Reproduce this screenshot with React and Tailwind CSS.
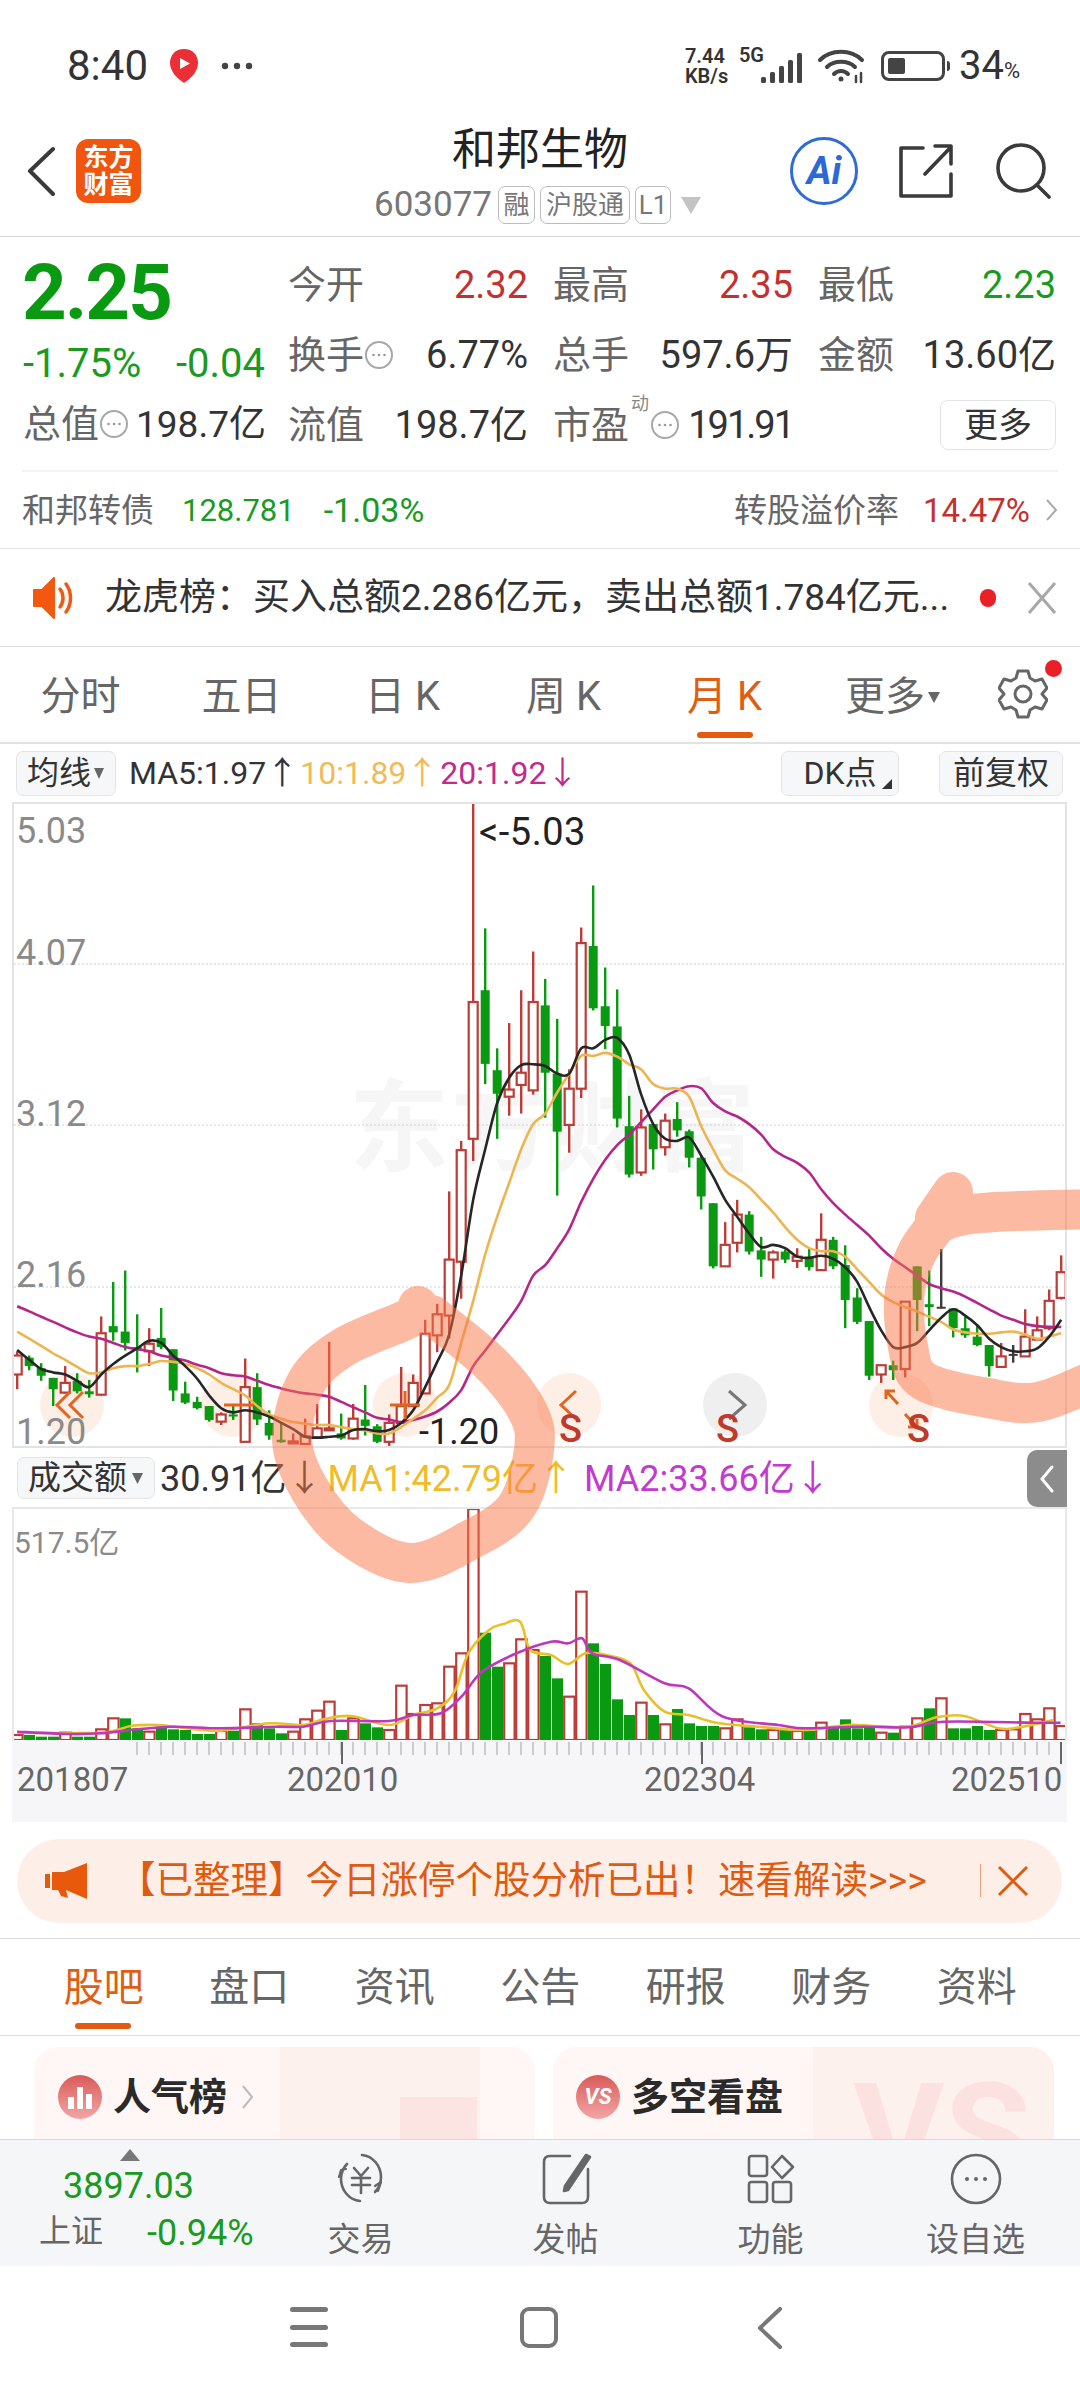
import React from "react";

const X = (i) => 17.2 + 12 * i;
const Y = (z) => 800 + z / 2.376;

const C = [
["r",1310,1320,1365,1400],["g",1320,1325,1345,1355],["g",1338,1350,1368,1380],["g",1373,1373,1400,1440],["r",1345,1385,1408,1410],["g",1362,1380,1405,1410],["g",1378,1405,1412,1420],["r",1227,1267,1413,1415],["g",1145,1250,1265,1285],["g",1118,1263,1290,1308],
["g",1222,1300,1306,1360],["r",1255,1292,1310,1345],["g",1207,1278,1300,1305],["g",1305,1305,1403,1428],["g",1382,1410,1432,1435],["g",1418,1430,1445,1448],["g",1440,1440,1473,1477],["r",1455,1460,1477,1485],["g",1435,1460,1464,1473],["r",1327,1395,1525,1525],
["g",1362,1395,1472,1485],["g",1450,1480,1510,1520],["g",1480,1520,1526,1527],["r",1505,1524,1528,1530],["r",1470,1512,1530,1530],["r",1435,1493,1515,1515],["r",1287,1493,1497,1497],["g",1458,1505,1517,1520],["r",1435,1470,1517,1520],["g",1390,1472,1487,1510],
["g",1483,1488,1525,1528],["r",1460,1480,1525,1540],["r",1347,1440,1480,1480],["r",1365,1385,1440,1440],["r",1235,1268,1410,1410],["r",1197,1222,1272,1312],["r",930,1092,1225,1280],["r",810,832,1097,1185],["r",8,480,805,858],["g",305,452,627,675],
["g",590,642,698,805],["r",530,688,705,750],["r",452,648,677,745],["r",360,480,690,700],["g",425,488,648,755],["g",520,650,788,940],["r",640,686,772,838],["r",303,340,686,708],["g",203,347,495,500],["g",398,490,537,592],
["g",450,538,757,778],["g",703,775,890,897],["r",735,778,885,893],["g",770,770,830,878],["r",745,762,825,845],["g",718,758,785,800],["g",783,787,850,873],["g",845,850,942,973],["g",958,958,1108,1113],["r",1003,1057,1108,1108],
["r",950,985,1052,1075],["g",977,985,1073,1080],["g",1038,1070,1092,1133],["r",1070,1075,1092,1137],["g",1068,1073,1092,1100],["r",1065,1085,1095,1112],["g",1065,1085,1110,1118],["r",982,1045,1117,1118],["g",1038,1045,1108,1115],["g",1058,1105,1188,1255],
["g",1160,1182,1240,1245],["g",1238,1238,1368,1378],["r",1343,1343,1365,1385],["g",1332,1343,1355,1378],["r",1192,1192,1352,1372],["g",1108,1108,1188,1262],["g",1118,1198,1205,1250],["k",1067,1204,1208,1208],["g",1208,1208,1255,1277],["g",1228,1255,1272,1278],
["g",1250,1275,1295,1298],["g",1295,1295,1345,1370],["r",1290,1322,1347,1347],["k",1295,1316,1320,1337],["r",1210,1275,1322,1322],["r",1227,1260,1282,1282],["r",1163,1190,1255,1260],["r",1082,1122,1183,1187],
];

const MA5 = [1307,1330,1352,1360,1365,1380,1395,1365,1340,1320,1303,1285,1290,1320,1345,1375,1415,1445,1455,1450,1455,1465,1480,1495,1513,1515,1513,1510,1497,1495,1500,1497,1480,1450,1395,1335,1270,1130,950,830,720,660,630,628,632,650,650,590,590,570,565,605,700,770,805,810,802,845,895,950,990,1030,1062,1057,1065,1085,1088,1083,1090,1110,1145,1205,1260,1300,1300,1290,1260,1230,1210,1225,1248,1280,1300,1310,1310,1303,1275,1235];
const MA10 = [1263,1280,1297,1315,1330,1347,1362,1360,1350,1345,1345,1340,1333,1335,1340,1350,1365,1385,1400,1415,1440,1460,1470,1478,1482,1485,1485,1490,1495,1498,1505,1505,1490,1470,1450,1420,1390,1290,1190,1080,990,910,830,770,745,695,650,608,608,601,610,628,640,675,686,686,705,775,830,880,900,920,950,980,1015,1045,1065,1072,1072,1085,1115,1145,1175,1193,1205,1215,1228,1240,1258,1265,1268,1268,1265,1263,1270,1280,1275,1267];
const MA20 = [1203,1215,1228,1240,1253,1265,1275,1280,1290,1300,1305,1310,1320,1325,1332,1342,1350,1362,1367,1370,1380,1390,1398,1405,1410,1413,1418,1430,1443,1455,1468,1472,1478,1473,1465,1453,1432,1402,1345,1308,1270,1232,1190,1130,1105,1065,1020,955,900,855,820,795,765,735,705,690,680,685,720,740,752,770,795,830,848,862,885,925,958,985,1010,1035,1065,1090,1110,1130,1150,1160,1168,1180,1195,1210,1225,1235,1245,1250,1252,1252];

const V = "r885 g885 g890 g890 r878 g890 g890 r868 r835 g835 g865 r875 g860 g868 g870 g882 g882 r873 g872 r808 g850 g865 g880 r875 r838 r812 r785 g870 r835 g850 g862 r870 r737 r822 r795 r790 r680 r640 r207 g578 g680 r670 r598 r630 g648 g715 r770 r455 g610 g672 g778 g825 r788 g825 r853 g807 g850 g858 g858 r865 r838 g862 g868 r870 g870 r873 g872 r848 g860 g838 g865 g862 r878 g878 r860 r835 g805 r775 g865 g865 g858 g870 r870 r868 r822 r838 r805 r858".split(" ").map((s) => [s[0], Number(s.slice(1))]);
const VY = (z) => 1440 + z / 3;
const VOL1 = [[25,878],[147,878],[190,858],[230,855],[260,862],[320,872],[390,850],[440,855],[470,838],[510,828],[565,855],[600,825],[635,805],[660,755],[680,640],[710,570],[730,553],[755,545],[770,630],[800,645],[825,672],[850,640],[880,645],[915,670],[935,750],[965,815],[1000,825],[1040,848],[1100,860],[1170,870],[1230,855],[1270,858],[1320,860],[1360,832],[1400,828],[1450,865],[1480,862],[1530,840]];
const VOL2 = [[25,875],[100,882],[147,880],[190,870],[250,860],[320,865],[400,860],[440,860],[480,843],[565,843],[600,825],[640,820],[670,770],[700,695],[750,640],[800,605],[825,610],[845,595],[860,640],[900,660],[965,730],[1000,745],[1050,830],[1130,855],[1170,865],[1250,860],[1320,862],[1370,845],[1500,848],[1540,848]];

function smooth(p) {
  let d = `M${p[0][0].toFixed(1)} ${p[0][1].toFixed(1)}`;
  for (let i = 0; i < p.length - 1; i++) {
    const a = p[i - 1] || p[i], b = p[i], c = p[i + 1], e = p[i + 2] || c;
    d += `C${(b[0] + (c[0] - a[0]) / 6).toFixed(1)} ${(b[1] + (c[1] - a[1]) / 6).toFixed(1)} ${(c[0] - (e[0] - b[0]) / 6).toFixed(1)} ${(c[1] - (e[1] - b[1]) / 6).toFixed(1)} ${c[0].toFixed(1)} ${c[1].toFixed(1)}`;
  }
  return d;
}
const maPath = (a) => smooth(a.map((z, i) => [X(i), Y(z)]));
const volPath = (a) => smooth(a.map(([x, y]) => [x / 1.452, VY(y)]));

const RED = "#bd3c38", GREEN = "#0a9a12", ORANGE = "#e2641f";

function PriceChart() {
  return (
    <svg viewBox="14 804 1051 642" width="1051" height="642" className="block">
      {[964, 1125, 1287].map((y) => (
        <line key={y} x1="14" x2="1065" y1={y} y2={y} stroke="#cfcfcf" strokeWidth="1" strokeDasharray="2 2" />
      ))}
      {[72, 233, 405, 569, 901].map((x) => <circle key={x} cx={x} cy="1405" r="32" fill="#fdeee6" />)}
      <circle cx="735" cy="1405" r="32" fill="#efefef" />
      {C.map(([t, wt, bt, bb, wb], i) => {
        const x = X(i);
        const col = t === "r" ? RED : t === "g" ? GREEN : "#3c3c3c";
        const h = Y(bb) - Y(bt);
        return (
          <g key={i}>
            <line x1={x} x2={x} y1={Y(wt)} y2={Y(wb)} stroke={col} strokeWidth="2.4" />
            {t === "r" ? (
              <rect x={x - 4.5} y={Y(bt)} width="9" height={Math.max(h, 2)} fill="#fff" stroke={col} strokeWidth="2.2" />
            ) : (
              <rect x={x - 4.5} y={Y(bt)} width="9" height={Math.max(h, 2)} fill={col} />
            )}
          </g>
        );
      })}
      <path d={maPath(MA20)} fill="none" stroke="#b5268b" strokeWidth="2.6" />
      <path d={maPath(MA10)} fill="none" stroke="#eeb451" strokeWidth="2.6" />
      <path d={maPath(MA5)} fill="none" stroke="#262626" strokeWidth="2.6" />
      <g fill="none" stroke={ORANGE} strokeWidth="3">
        <path d="M70 1392L57 1405L70 1418M83 1392L70 1405L83 1418" />
        <path d="M224 1405H253" />
        <path d="M390 1405H420M405 1391V1419" />
        <path d="M576 1391L561 1405L576 1419" />
        <path d="M898 1404L886 1391M886 1399V1391H895M905 1414L917 1427M917 1419V1427H908" />
      </g>
      <path d="M729 1391L745 1405L729 1419" fill="none" stroke="#777" strokeWidth="3" />
    </svg>
  );
}

function VolChart() {
  return (
    <svg viewBox="14 1509 1051 231" width="1051" height="231" className="block">
      {V.map(([t, z], i) => {
        const x = X(i), y = VY(z);
        return t === "r" ? (
          <rect key={i} x={x - 5} y={y} width="10.4" height={1740 - y} fill="#fff" stroke={RED} strokeWidth="2.2" />
        ) : (
          <rect key={i} x={x - 5.2} y={y} width="11" height={1740 - y} fill={GREEN} />
        );
      })}
      <path d={volPath(VOL1)} fill="none" stroke="#e8c02a" strokeWidth="2.6" />
      <path d={volPath(VOL2)} fill="none" stroke="#bd38bd" strokeWidth="2.6" />
    </svg>
  );
}

const Dots = () => (
  <svg width="30" height="30" viewBox="0 0 30 30" className="shrink-0">
    <circle cx="15" cy="15" r="13" fill="none" stroke="#a8a8a8" strokeWidth="2" />
    <circle cx="9.5" cy="15" r="1.3" fill="#999" /><circle cx="15" cy="15" r="1.3" fill="#999" /><circle cx="20.5" cy="15" r="1.3" fill="#999" />
  </svg>
);

const Cell = ({ label, extra, value, cls = "text-[#333]" }) => (
  <div className="flex items-center justify-between h-[70px] whitespace-nowrap">
    <span className="flex items-center text-[#666]">{label}{extra}</span>
    <span className={cls}>{value}</span>
  </div>
);

const Tag = ({ children, w }) => (
  <span className={`flex items-center justify-center h-[38px] border border-[#bdbdbd] rounded-[7px] text-[26px] text-[#777] ${w}`}>{children}</span>
);

const Stroke = ({ children, w = 52, vb = "0 0 52 52" }) => (
  <svg width={w} height={w} viewBox={vb} fill="none" stroke="#666" strokeWidth="2.6" strokeLinecap="round" strokeLinejoin="round">{children}</svg>
);

const NavItem = ({ icon, label }) => (
  <div className="w-[205px] flex flex-col items-center">
    <div className="h-[64px] mt-[7px] flex items-center justify-center">{icon}</div>
    <span className="text-[33px] leading-none mt-[12px] text-[#666]">{label}</span>
  </div>
);

export default function App() {
  return (
    <div className="relative w-[1080px] h-[2400px] overflow-hidden bg-white font-[Roboto,'Noto_Sans_CJK_SC',sans-serif] font-light">
      {/* status bar */}
      <div className="h-[120px] pt-[46px] flex items-start justify-between pl-[67px] pr-[60px]">
        <div className="flex items-center h-[40px]">
          <span className="text-[42px] font-normal text-[#333] leading-none">8:40</span>
          <svg width="32" height="36" viewBox="0 0 32 36" className="ml-[20px]">
            <path d="M16 1C7.5 1 2 7 2 15C2 24 10 31 16 35C22 31 30 24 30 15C30 7 24.5 1 16 1Z" fill="#ec2f36" />
            <path d="M12 10L22 15.500L12 21Z" fill="#fff" />
          </svg>
          <svg width="32" height="8" viewBox="0 0 32 8" className="ml-[21px]">
            <circle cx="4" cy="4" r="3.200" fill="#444" /><circle cx="16" cy="4" r="3.200" fill="#444" /><circle cx="28" cy="4" r="3.200" fill="#444" />
          </svg>
        </div>
        <div className="flex items-center h-[40px] text-[#333]">
          <div className="flex flex-col text-[20px] font-semibold leading-[20px] w-[54px]">
            <span>7.44</span><span>KB/s</span>
          </div>
          <div className="relative w-[64px] h-[40px]">
            <span className="absolute left-0 top-0 text-[20px] font-semibold leading-[19px]">5G</span>
            <svg width="46" height="32" viewBox="0 0 46 32" className="absolute left-[20px] top-[6px]">
              <rect x="2" y="25" width="5" height="6" rx="1.500" fill="#444" />
              <rect x="11" y="20" width="5" height="11" rx="1.500" fill="#444" />
              <rect x="20" y="14" width="5" height="17" rx="1.500" fill="#444" />
              <rect x="29" y="8" width="5" height="23" rx="1.500" fill="#444" />
              <rect x="38" y="1" width="5" height="30" rx="1.500" fill="#444" />
            </svg>
          </div>
          <svg width="50" height="36" viewBox="0 0 50 36" className="ml-[14px]" fill="none" stroke="#444" strokeWidth="4" strokeLinecap="round">
            <path d="M3 12C14 1 34 1 45 12" />
            <path d="M10 19C17 12 31 12 38 19" />
            <path d="M17 26C21 22 27 22 31 26" />
            <circle cx="24" cy="31" r="2.500" fill="#444" stroke="none" />
            <path d="M39 28V34M44 25V34" strokeWidth="2.500" />
          </svg>
          <div className="ml-[14px] flex items-center">
            <div className="w-[64px] h-[30px] rounded-[8px] border-[3px] border-[#444] p-[4px]">
              <div className="w-[17px] h-full bg-[#444] rounded-[2px]" />
            </div>
            <div className="w-[3px] h-[10px] ml-[2px] bg-[#444] rounded-r-sm" />
          </div>
          <span className="ml-[9px] text-[40px] font-normal leading-none">34</span>
          <span className="text-[22px] font-normal leading-none mt-[10px]">%</span>
        </div>
      </div>

      {/* header */}
      <div className="h-[117px] border-b border-[#d6d6d6] flex">
        <div className="w-[300px] flex items-center gap-[20px] pl-[26px] pb-[14px]">
          <svg width="30" height="50" viewBox="0 0 30 50" fill="none" stroke="#3a3a3a" strokeWidth="4" strokeLinecap="round" strokeLinejoin="round" className="shrink-0">
            <path d="M27 3L4 25L27 48" />
          </svg>
          <div className="w-[65px] h-[64px] shrink-0 rounded-[12px] bg-[#f0560f] flex flex-col items-center justify-center text-white text-[25px] leading-[27px] font-bold">
            <span>东方</span><span>财富</span>
          </div>
        </div>
        <div className="flex-1 flex flex-col items-center">
          <div className="h-[60px] flex items-center text-[44px] text-[#222] font-normal leading-none">和邦生物</div>
          <div className="h-[50px] flex items-center gap-[5px] text-[35px] text-[#777] font-normal whitespace-nowrap -ml-[4px]">
            <span className="mr-[1px]">603077</span>
            <Tag w="w-[37px]">融</Tag>
            <Tag w="w-[90px]">沪股通</Tag>
            <Tag w="w-[36px]">L1</Tag>
            <svg width="22" height="20" viewBox="0 0 22 20" className="ml-[4px] shrink-0"><path d="M1 2H21L11 19Z" fill="#c4c4c4" /></svg>
          </div>
        </div>
        <div className="w-[300px] flex items-center justify-end pr-[29px] pb-[14px]">
          <div className="w-[68px] h-[68px] shrink-0 rounded-full border-[3px] border-[#2f6bd6] flex items-center justify-center text-[#2b68d8] text-[38px] font-bold italic leading-none">Ai</div>
          <svg width="54" height="54" viewBox="0 0 54 54" fill="none" stroke="#3a3a3a" strokeWidth="3.600" className="ml-[41px] shrink-0" strokeLinecap="round" strokeLinejoin="round">
            <path d="M24 4H2V52H52V30" /><path d="M52 2H36M52 2V20M52 3L26 30" />
          </svg>
          <svg width="56" height="56" viewBox="0 0 56 56" fill="none" stroke="#3a3a3a" strokeWidth="3.600" className="ml-[42px] shrink-0" strokeLinecap="round">
            <circle cx="26" cy="25" r="23" /><path d="M42 42L54 54" />
          </svg>
        </div>
      </div>

      {/* quote */}
      <div className="h-[233px] pt-[13px] pl-[24px] pr-[24px] flex text-[38px] font-normal leading-none">
        <div className="w-[264px] shrink-0 flex flex-col -mt-[2px]">
          <div className="h-[90px] flex items-center text-[78px] font-bold text-[#0a9a12] -tracking-[2px] -ml-[2px]">2.25</div>
          <div className="h-[52px] w-[242px] -ml-[1px] flex items-center justify-between text-[40px] text-[#1a9a1f]"><span>-1.75%</span><span>-0.04</span></div>
          <div className="h-[68px] flex items-center text-[#333] whitespace-nowrap -ml-[1px]"><span className="text-[#666]">总值</span><Dots /><span className="ml-[7px] text-[37px]">198.7亿</span></div>
        </div>
        <div className="grid grid-cols-[240px_240px_238px] gap-x-[25px] h-[210px]">
          <Cell label="今开" value="2.32" cls="text-[#c3302f]" />
          <Cell label="最高" value="2.35" cls="text-[#c3302f]" />
          <Cell label="最低" value="2.23" cls="text-[#1a9a1f]" />
          <Cell label="换手" extra={<Dots />} value="6.77%" />
          <Cell label="总手" value="597.6万" />
          <Cell label="金额" value="13.60亿" />
          <Cell label="流值" value="198.7亿" />
          <Cell label={<span className="relative">市盈<span className="absolute -right-[20px] -top-[11px] text-[18px] text-[#888]">动</span></span>} extra={<span className="ml-[21px]"><Dots /></span>} value="191.91" cls="text-[#333] -tracking-[2px]" />
          <div className="flex items-center justify-end h-[70px]">
            <div className="w-[116px] h-[50px] border border-[#e4e4e4] rounded-[8px] flex items-center justify-center text-[34px] text-[#333]">更多</div>
          </div>
        </div>
      </div>

      {/* bond row */}
      <div className="mx-[22px] border-t-2 border-[#f2f2f2]" />
      <div className="h-[77px] pl-[22px] pr-[22px] flex items-center text-[33px] font-normal leading-none border-b border-[#e8e8e8]">
        <span className="text-[#666]">和邦转债</span>
        <span className="ml-[28px] text-[31px] text-[#1a9a1f]">128.781</span>
        <span className="ml-[29px] text-[34px] text-[#1a9a1f]">-1.03%</span>
        <span className="ml-auto text-[#666]">转股溢价率</span>
        <span className="ml-[24px] text-[#c3302f]">14.47%</span>
        <svg width="13" height="24" viewBox="0 0 13 24" className="ml-[15px]" fill="none" stroke="#aaa" strokeWidth="2"><path d="M2 2L11 12L2 22" /></svg>
      </div>

      {/* notice */}
      <div className="h-[98px] relative flex items-center pl-[32px] border-b border-[#dedede] text-[37px] text-[#333] font-normal leading-none">
        <svg width="42" height="46" viewBox="0 0 42 46" className="shrink-0">
          <path d="M2 15H10L22 3V43L10 31H2Z" fill="#f2580f" stroke="#f2580f" strokeWidth="2" strokeLinejoin="round" />
          <path d="M28 14C32 19 32 27 28 32M34 9C40 17 40 29 34 37" fill="none" stroke="#f2580f" strokeWidth="3.500" strokeLinecap="round" />
        </svg>
        <span className="ml-[31px] whitespace-nowrap">龙虎榜：买入总额2.286亿元，卖出总额1.784亿元...</span>
        <span className="absolute left-[980px] top-[40px] w-[16px] h-[18px] rounded-full bg-[#ea2027]" />
        <svg width="30" height="34" viewBox="0 0 30 34" className="absolute left-[1027px] top-[32px]" fill="none" stroke="#a8a8a8" strokeWidth="3"><path d="M2 2L28 32M28 2L2 32" /></svg>
      </div>

      {/* period tabs */}
      <div className="h-[97px] relative flex items-start pt-[30px] border-b-2 border-[#e2e2e2] text-[40px] text-[#666] leading-none font-normal">
        {["分时", "五日", "日 K", "周 K"].map((t) => <span key={t} className="w-[161px] text-center h-[44px]">{t}</span>)}
        <span className="w-[161px] text-center text-[#df5e12] relative">月 K<span className="absolute left-[53px] top-[55px] w-[56px] h-[6px] rounded-full bg-[#e35b10]" /></span>
        <span className="ml-[40px] flex items-center">更多<svg width="14" height="14" viewBox="0 0 14 14" className="ml-[2px]"><path d="M1 2H13L7 13Z" fill="#666" /></svg></span>
        <svg width="50" height="52" viewBox="0 0 50 52" className="absolute left-[998px] top-[21px]" fill="none" stroke="#666" strokeWidth="3" strokeLinejoin="round">
          <path d="M20 3H30L32 10L37 13L44 11L49 20L44 26L49 32L44 41L37 39L32 42L30 49H20L18 42L13 39L6 41L1 32L6 26L1 20L6 11L13 13L18 10Z" />
          <circle cx="25" cy="26" r="8" />
        </svg>
        <span className="absolute left-[1045px] top-[13px] w-[17px] h-[17px] rounded-full bg-[#ea2027]" />
      </div>

      {/* MA toolbar */}
      <div className="h-[58px] flex items-center pl-[16px] pr-[17px] text-[32px] leading-none font-normal">
        <div className="w-[100px] h-[45px] bg-[#f6f7f9] border border-[#e4e4e4] rounded-[7px] flex items-center justify-center text-[#333]">均线<svg width="12" height="14" viewBox="0 0 12 14" className="ml-[2px]"><path d="M1 2H11L6 13Z" fill="#666" /></svg></div>
        <span className="ml-[13px] text-[#333]">MA5:1.97↑</span>
        <span className="text-[#f2bb55] ml-[2px]">10:1.89↑</span>
        <span className="text-[#c12a8e] ml-[2px]">20:1.92↓</span>
        <div className="relative ml-auto w-[118px] h-[45px] bg-[#f6f7f9] border border-[#e4e4e4] rounded-[7px] flex items-center justify-center text-[#333]">DK点<span className="absolute right-[6px] bottom-[6px] w-0 h-0 border-l-[10px] border-l-transparent border-b-[10px] border-b-[#333]" /></div>
        <div className="ml-[40px] w-[124px] h-[45px] bg-[#f6f7f9] border border-[#e4e4e4] rounded-[7px] flex items-center justify-center text-[#333]">前复权</div>
      </div>

      {/* price chart */}
      <div className="relative mx-[12px] w-[1055px] h-[646px] border-2 border-[#e3e3e3] text-[36px] leading-none font-normal">
        <span className="absolute left-[335px] top-[275px] text-[100px] font-bold text-[#f6f6f6] tracking-[2px]">东方财富</span>
        <div className="absolute left-0 top-0"><PriceChart /></div>
        <span className="absolute left-[2px] top-[9px] text-[#8a8a8a]">5.03</span>
        <span className="absolute left-[2px] top-[131px] text-[#8a8a8a]">4.07</span>
        <span className="absolute left-[2px] top-[292px] text-[#8a8a8a]">3.12</span>
        <span className="absolute left-[2px] top-[453px] text-[#8a8a8a]">2.16</span>
        <span className="absolute left-[2px] top-[610px] text-[#8a8a8a]">1.20</span>
        <span className="absolute left-[465px] top-[9px] text-[#222] text-[38px] tracking-[0.5px]">&lt;-5.03</span>
        <span className="absolute left-[405px] top-[610px] text-[#222]">-1.20</span>
        <span className="absolute left-[545px] top-[606px] text-[#c0392b] font-medium text-[38px]">S</span>
        <span className="absolute left-[702px] top-[606px] text-[#c0392b] font-medium text-[38px]">S</span>
        <span className="absolute left-[893px] top-[606px] text-[#c0392b] font-medium text-[38px]">S</span>
      </div>

      {/* volume toolbar */}
      <div className="relative h-[59px] flex items-center pl-[17px] pt-[3px] text-[36px] leading-none font-normal">
        <div className="w-[138px] h-[42px] -mt-[3px] bg-[#f6f7f9] border border-[#e4e4e4] rounded-[7px] flex items-center justify-center text-[33px] text-[#333]">成交额<svg width="13" height="14" viewBox="0 0 13 14" className="ml-[4px]"><path d="M1 2H12L6.500 13Z" fill="#666" /></svg></div>
        <span className="ml-[5px] text-[#333]">30.91亿↓</span>
        <span className="ml-[5px] text-[#f0bc2b]">MA1:42.79亿↑</span>
        <span className="ml-[10px] text-[#c23bd0]">MA2:33.66亿↓</span>
        <div className="absolute left-[1027px] top-[2px] w-[40px] h-[57px] rounded-l-[10px] bg-[#8c8c8c] flex items-center justify-center">
          <svg width="16" height="30" viewBox="0 0 16 30" fill="none" stroke="#fff" strokeWidth="3" strokeLinecap="round"><path d="M13 3L3 15L13 27" /></svg>
        </div>
      </div>

      {/* volume chart */}
      <div className="relative mx-[12px] w-[1055px] h-[233px] border-x-2 border-t-2 border-[#e8e8e8] text-[30px] leading-none font-normal">
        <VolChart />
        <span className="absolute left-0 top-[19px] text-[#8a8a8a]">517.5亿</span>
      </div>

      {/* time axis */}
      <div className="relative mx-[12px] w-[1055px] h-[82px] bg-[#f6f6f9] text-[33px] leading-none font-normal text-[#666]">
        <svg width="1055" height="24" viewBox="0 0 1055 24" className="block">
          {Array.from({ length: 78 }, (_, i) => <line key={i} x1={5 + 12 * (i + 10)} x2={5 + 12 * (i + 10)} y1="2" y2="15" stroke="#bcbcbc" strokeWidth="1.500" />)}
          {[330, 690, 1049].map((x) => <line key={x} x1={x} x2={x} y1="2" y2="24" stroke="#666" strokeWidth="2" />)}
        </svg>
        <span className="absolute left-[5px] top-[23px]">201807</span>
        <span className="absolute left-[275px] top-[23px]">202010</span>
        <span className="absolute left-[632px] top-[23px]">202304</span>
        <span className="absolute left-[939px] top-[23px]">202510</span>
      </div>

      {/* banner */}
      <div className="mt-[17px] mx-[17px] w-[1045px] h-[84px] rounded-full bg-[#fdefe7] flex items-center pl-[27px] text-[37.500px] text-[#e05a10] leading-none font-normal relative">
        <svg width="44" height="38" viewBox="0 0 44 38" className="shrink-0">
          <path d="M1 12H6V26H1Z M8 10H20L43 1V37L22 28L24 36L17 34L14 28H8Z" fill="#e8590c" />
        </svg>
        <span className="ml-[30px] whitespace-nowrap">【已整理】今日涨停个股分析已出！速看解读&gt;&gt;&gt;</span>
        <span className="absolute left-[963px] top-[25px] w-px h-[33px] bg-[#e8a07a]" />
        <svg width="32" height="32" viewBox="0 0 32 32" className="absolute left-[980px] top-[26px]" fill="none" stroke="#e05a10" strokeWidth="3"><path d="M2 2L30 30M30 2L2 30" /></svg>
      </div>

      {/* bottom tabs */}
      <div className="mt-[15px] h-[98px] border-y border-[#dcdcdc] flex items-start pt-[29px] pl-[31px] text-[40px] leading-none text-[#666] font-normal">
        {["股吧", "盘口", "资讯", "公告", "研报", "财务", "资料"].map((t, i) => (
          <span key={t} className={`relative w-[145.500px] text-center ${i === 0 ? "text-[#df5e12]" : ""}`}>
            {t}
            {i === 0 && <span className="absolute left-[44px] top-[55px] w-[56px] h-[6px] rounded-full bg-[#e35b10]" />}
          </span>
        ))}
      </div>

      {/* cards */}
      <div className="relative h-[103px] pt-[11px] flex gap-[18px] pl-[34px] overflow-hidden text-[38px] font-bold text-[#2a2a2a] leading-none">
        <div className="relative w-[501px] h-[120px] rounded-t-[24px] bg-[#fef7f5] overflow-hidden">
          <div className="absolute left-[246px] top-0 w-[200px] h-[120px] bg-[#fdf1ee]" />
          <div className="absolute left-[366px] top-[50px] w-[77px] h-[70px] bg-[#fbe4e2]" />
          <div className="relative flex items-center h-[48px] mt-[26px] pl-[24px]">
            <div className="w-[44px] h-[44px] rounded-full bg-gradient-to-b from-[#d85a5a] to-[#f2a5a5] flex items-center justify-center">
              <svg width="28" height="24" viewBox="0 0 28 24"><path d="M2 12H8V24H2ZM11 2H17V24H11ZM20 9H26V24H20Z" fill="#fff" /></svg>
            </div>
            <span className="ml-[11px]">人气榜</span>
            <svg width="13" height="26" viewBox="0 0 13 26" className="ml-[14px]" fill="none" stroke="#bbb" strokeWidth="2"><path d="M2 2L11 13L2 24" /></svg>
          </div>
        </div>
        <div className="relative w-[501px] h-[120px] rounded-t-[24px] bg-[#fef7f5] overflow-hidden">
          <div className="absolute left-[260px] top-0 w-[241px] h-[120px] bg-[#fdf1ee]" />
          <div className="absolute left-[300px] top-[25px] w-[201px] h-[80px] pt-[22px] overflow-hidden">
            <span className="block text-[140px] leading-[80px] font-bold text-[#fbe2e0]">VS</span>
          </div>
          <div className="relative flex items-center h-[48px] mt-[26px] pl-[23px]">
            <div className="w-[44px] h-[44px] rounded-full bg-gradient-to-b from-[#d85a5a] to-[#f2a5a5] flex items-center justify-center text-white text-[22px] italic font-bold">VS</div>
            <span className="ml-[11px]">多空看盘</span>
          </div>
        </div>
      </div>

      {/* bottom nav */}
      <div className="relative h-[127px] bg-[#f5f6f8] border-t border-[#d8d8d8] flex">
        <div className="w-[258px] shrink-0 relative font-normal leading-none">
          <svg width="20" height="12" viewBox="0 0 20 12" className="absolute left-[120px] top-[9px]"><path d="M0 12L10 0L20 12Z" fill="#777" /></svg>
          <span className="absolute left-[63px] top-[28px] text-[36px] text-[#1a9a1f]">3897.03</span>
          <span className="absolute left-[39px] top-[75px] text-[32px] text-[#666]">上证</span>
          <span className="absolute left-[147px] top-[75px] text-[36px] text-[#1a9a1f]">-0.94%</span>
        </div>
        <div className="flex font-normal">
          <NavItem label="交易" icon={
            <Stroke>
              <path d="M27 2C38 3 46 13 46 24C46 30 44 35 40 39M25 48C14 47 6 37 6 26C6 20 8 15 12 11" />
              <path d="M40 33L46 29L43 38M6 17L4 24M6 17L11 16" strokeWidth="2.200" />
              <path d="M19 15L26 23L33 15M17 25H35M17 32H35M26 23V40" />
            </Stroke>
          } />
          <NavItem label="发帖" icon={
            <Stroke>
              <path d="M30 3H10C6 3 4 5 4 9V44C4 48 6 50 10 50H42C46 50 48 48 48 44V16" />
              <path d="M46 2L50 4L28 37L24 38L25 33Z" fill="#666" />
            </Stroke>
          } />
          <NavItem label="功能" icon={
            <Stroke>
              <rect x="4" y="3" width="18" height="20" rx="2.500" />
              <path d="M37 3L48 14L37 25L27 14Z" />
              <rect x="4" y="29" width="18" height="20" rx="2.500" />
              <rect x="28" y="29" width="18" height="20" rx="2.500" />
            </Stroke>
          } />
          <NavItem label="设自选" icon={
            <Stroke>
              <circle cx="26" cy="26" r="24" />
              <circle cx="17" cy="26" r="2" fill="#666" stroke="none" /><circle cx="26" cy="26" r="2" fill="#666" stroke="none" /><circle cx="35" cy="26" r="2" fill="#666" stroke="none" />
            </Stroke>
          } />
        </div>
      </div>

      {/* system nav */}
      <div className="h-[133px] flex items-start pt-[41px]">
        <div className="ml-[290px] w-[38px] h-[40px] flex flex-col justify-between">
          <span className="h-[5px] rounded-sm bg-[#777]" /><span className="h-[5px] rounded-sm bg-[#777]" /><span className="h-[5px] rounded-sm bg-[#777]" />
        </div>
        <div className="ml-[192px] w-[38px] h-[41px] border-[4px] border-[#777] rounded-[9px]" />
        <svg width="26" height="42" viewBox="0 0 26 42" className="ml-[199px]" fill="none" stroke="#777" strokeWidth="4" strokeLinecap="round" strokeLinejoin="round"><path d="M23 2L3 21L23 40" /></svg>
      </div>

      {/* hand-drawn annotation */}
      <svg className="absolute left-0 top-0 pointer-events-none" width="1080" height="2400" viewBox="0 0 1080 2400" fill="none" stroke="#fb7648" strokeOpacity="0.5" strokeWidth="40" strokeLinecap="round" strokeLinejoin="round">
        <path d={smooth([[432,1315],[491,1364],[528,1412],[534,1450],[516,1507],[470,1540],[410,1563],[348,1535],[310,1490],[292,1440],[306,1383],[344,1347],[412,1317],[418,1306]]) + smooth([[1095,1209],[964,1215],[925,1240],[905,1290],[908,1347],[924,1381],[988,1398],[1038,1402],[1095,1380]]) + "M953 1192L935 1218"} />
      </svg>
    </div>
  );
}
